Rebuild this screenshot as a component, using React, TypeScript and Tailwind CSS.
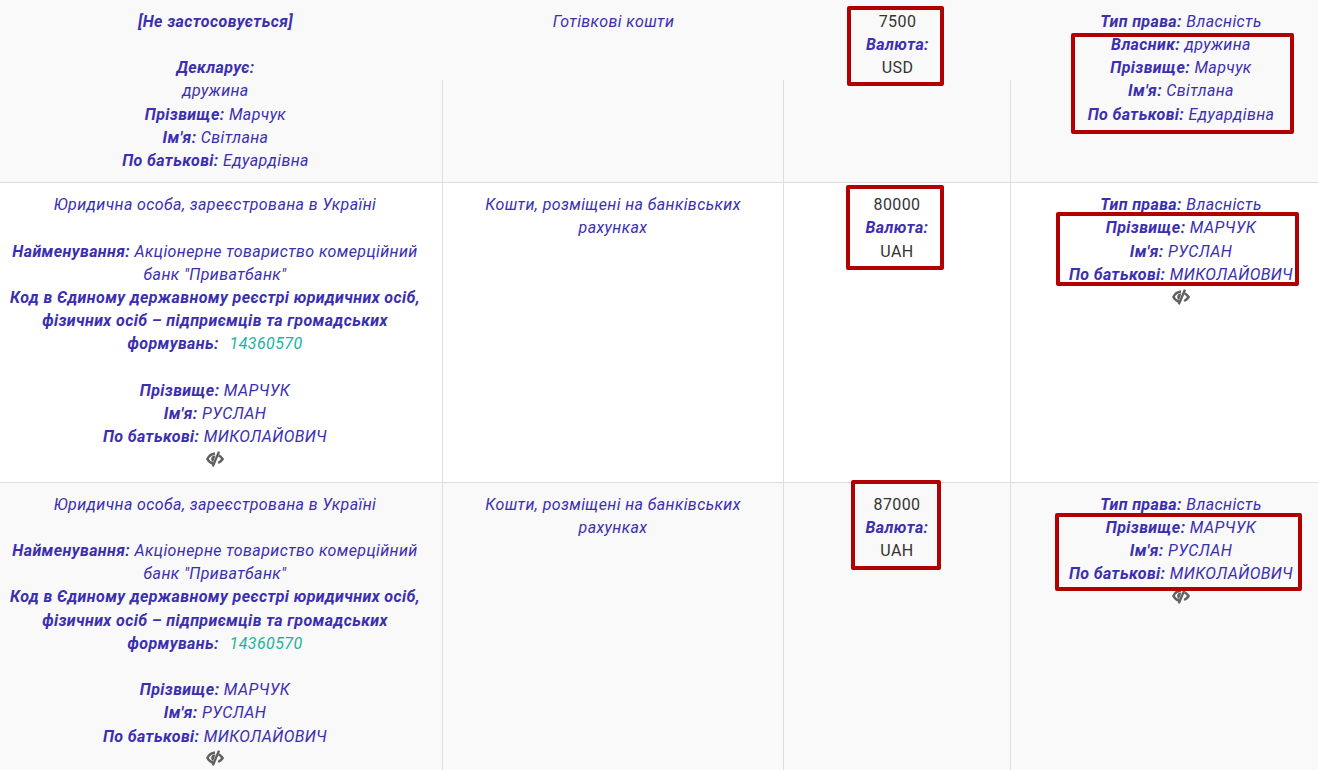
function Line({ label, value }: { label: string; value: string }) {
    return (
        <div>
            <b className="font-bold">{label}</b> {value}
        </div>
    )
}

function EyeOff() {
    return (
        <div className="flex h-[23.2px] items-center justify-center pb-[2px] text-[#606060]">
            <svg viewBox="0 0 18 16" className="h-[16px] w-[18px]" fill="none" stroke="currentColor" strokeWidth="2.5">
                <path d="M9 2.6C5.6 3 2.8 5.2 1.4 8C2.8 10.6 4.8 12.2 7.4 12.8" />
                <path d="M12.6 4.4C14.3 5.2 15.6 6.5 16.6 8C15.6 9.7 14.1 11 12.2 12" />
                <path d="M13 .6L6.8 15.4" strokeWidth="2.4" />
                <path d="M9.4 4.6A3.4 3.4 0 0 0 7.2 11Z" fill="currentColor" stroke="none" />
            </svg>
        </div>
    )
}

function Blank() {
    return <div className="h-[23.2px]" />
}

function Amount({ sum, currency }: { sum: string; currency: string }) {
    return (
        <div>
            <div className="text-[#333] not-italic">{sum}</div>
            <b className="font-bold">Валюта:</b>
            <div className="text-[#333] not-italic">{currency}</div>
        </div>
    )
}

function Company() {
    return (
        <>
            <div>Юридична особа, зареєстрована в Україні</div>
            <Blank />
            <Line label="Найменування:" value={'Акціонерне товариство комерційний банк "Приватбанк"'} />
            <div>
                <b className="font-bold">Код в Єдиному державному реєстрі юридичних осіб, фізичних осіб – підприємців та громадських формувань:</b>
                {'\u00a0 '}
                <span className="ml-[2px] text-[#1ab3a0]">14360570</span>
            </div>
            <Blank />
            <Line label="Прізвище:" value="МАРЧУК" />
            <Line label="Ім'я:" value="РУСЛАН" />
            <Line label="По батькові:" value="МИКОЛАЙОВИЧ" />
            <EyeOff />
        </>
    )
}

function Owner() {
    return (
        <>
            <Line label="Тип права:" value="Власність" />
            <Line label="Прізвище:" value="МАРЧУК" />
            <Line label="Ім'я:" value="РУСЛАН" />
            <Line label="По батькові:" value="МИКОЛАЙОВИЧ" />
            <EyeOff />
        </>
    )
}

export default function App() {
    const row = 'grid grid-cols-[455px_341px_227px_340px] border-b border-[#ddd]'
    const pad = 'px-[10px] pt-[9.8px] pb-[10.2px]'

    return (
        <div className="relative h-[770px] w-[1318px] overflow-hidden bg-white text-center font-['Roboto',sans-serif] text-[16px] leading-[23.2px] tracking-[0.4px] text-[#3b2fb0] italic">
            <div className="-ml-[12px] w-[1363px]">
                {/* first row: the top of the column lines is cut off in the picture */}
                <div className={`${row} bg-[#f9f9f9]`}>
                    <div className={`relative ${pad}`}>
                        <b className="font-bold">[Не застосовується]</b>
                        <Blank />
                        <b className="font-bold">Декларує:</b>
                        <div>дружина</div>
                        <Line label="Прізвище:" value="Марчук" />
                        <Line label="Ім'я:" value="Світлана" />
                        <Line label="По батькові:" value="Едуардівна" />
                        <div className="absolute top-[80px] right-0 bottom-0 w-px bg-[#ddd]" />
                    </div>
                    <div className={`relative ${pad}`}>
                        Готівкові кошти
                        <div className="absolute top-[80px] right-0 bottom-0 w-px bg-[#ddd]" />
                    </div>
                    <div className={`relative ${pad}`}>
                        <Amount sum="7500" currency="USD" />
                        <div className="absolute top-[80px] right-0 bottom-0 w-px bg-[#ddd]" />
                    </div>
                    <div className={pad}>
                        <Line label="Тип права:" value="Власність" />
                        <Line label="Власник:" value="дружина" />
                        <Line label="Прізвище:" value="Марчук" />
                        <Line label="Ім'я:" value="Світлана" />
                        <Line label="По батькові:" value="Едуардівна" />
                    </div>
                </div>

                <div className={row}>
                    <div className={`border-r border-[#ddd] ${pad}`}><Company /></div>
                    <div className={`border-r border-[#ddd] ${pad}`}>Кошти, розміщені на банківських рахунках</div>
                    <div className={`border-r border-[#ddd] ${pad}`}><Amount sum="80000" currency="UAH" /></div>
                    <div className={pad}><Owner /></div>
                </div>

                <div className={`${row} bg-[#f9f9f9]`}>
                    <div className={`border-r border-[#ddd] ${pad}`}><Company /></div>
                    <div className={`border-r border-[#ddd] ${pad}`}>Кошти, розміщені на банківських рахунках</div>
                    <div className={`border-r border-[#ddd] ${pad}`}><Amount sum="87000" currency="UAH" /></div>
                    <div className={pad}><Owner /></div>
                </div>
            </div>

            {/* red annotation frames drawn over the table */}
            <div className="absolute top-[6px] left-[847px] h-[80px] w-[97px] rounded-[2px] border-[4px] border-[#b00000]" />
            <div className="absolute top-[33px] left-[1071px] h-[101px] w-[223px] rounded-[2px] border-[4px] border-[#b00000]" />
            <div className="absolute top-[185px] left-[846px] h-[85px] w-[98px] rounded-[2px] border-[4px] border-[#b00000]" />
            <div className="absolute top-[212px] left-[1056px] h-[74px] w-[243px] rounded-[2px] border-[4px] border-[#b00000]" />
            <div className="absolute top-[480px] left-[851px] h-[90px] w-[90px] rounded-[2px] border-[4px] border-[#b00000]" />
            <div className="absolute top-[513px] left-[1055px] h-[78px] w-[247px] rounded-[2px] border-[4px] border-[#b00000]" />
        </div>
    )
}
